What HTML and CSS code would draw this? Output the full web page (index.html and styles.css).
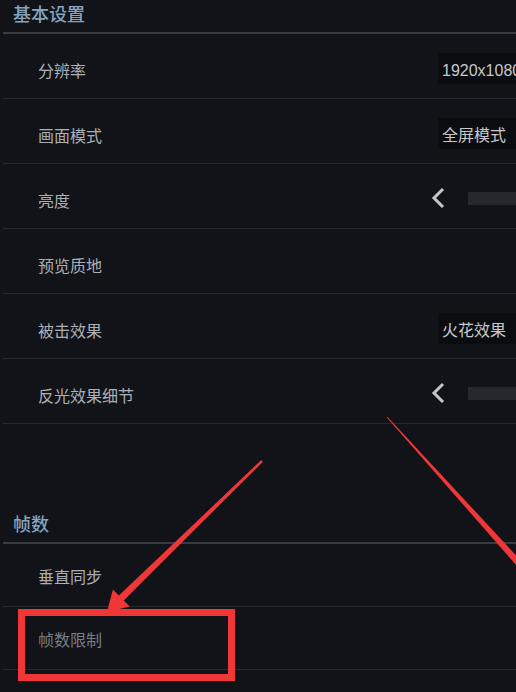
FILE: index.html
```html
<!DOCTYPE html>
<html>
  <head>
    <meta charset="utf-8">
    <meta name="viewport" content="width=device-width, initial-scale=1">
    <title>设置</title>
    <link rel="stylesheet" href="styles.css">
  </head>
<body>
  <div class="settings">

    <div class="group-title">基本设置</div>

    <div class="row">
      <div class="label">分辨率</div>
      <div class="control"><span class="value">1920x1080</span></div>
    </div>
    <div class="row">
      <div class="label">画面模式</div>
      <div class="control"><span class="value">全屏模式</span></div>
    </div>
    <div class="row">
      <div class="label">亮度</div>
      <div class="control">
        <svg class="chevron" width="16" height="22" viewBox="0 0 16 22"><polyline points="13,2 4,11 13,20" /></svg>
        <div class="slider"></div>
      </div>
    </div>
    <div class="row">
      <div class="label">预览质地</div>
      <div class="control"></div>
    </div>
    <div class="row">
      <div class="label">被击效果</div>
      <div class="control"><span class="value">火花效果</span></div>
    </div>
    <div class="row">
      <div class="label">反光效果细节</div>
      <div class="control">
        <svg class="chevron" width="16" height="22" viewBox="0 0 16 22"><polyline points="13,2 4,11 13,20" /></svg>
        <div class="slider"></div>
      </div>
    </div>

    <div class="group-title second">帧数</div>

    <div class="row short">
      <div class="label">垂直同步</div>
      <div class="control"></div>
    </div>
    <div class="row short">
      <div class="label dim">帧数限制</div>
      <div class="control"></div>
    </div>

  </div>

  <!-- red marks drawn over the screenshot -->
  <svg class="marks" width="516" height="692" viewBox="0 0 516 692">
    <polygon points="261.2,460.1 118.9,595.5 112.9,589.4 107,612 129.7,606.6 123.7,600.5 262.8,461.9" />
    <polygon points="386.6,417.3 387.4,416.7 532.6,573.2 527.4,577.9" />
    <rect x="21.5" y="612.5" width="210" height="65" />
  </svg>
</body>
</html>
```

FILE: styles.css
```css
body, html {margin: 0; padding: 0; background-color: rgb(17, 19, 24); overflow: hidden;}

body {
  width: 516px;
  height: 692px;
  position: relative;
  font-family: "Noto Sans CJK SC", "Liberation Sans", sans-serif;
}

.settings {
  padding-left: 3px;
}

.group-title {
  line-height: 26px;
  padding-bottom: 6px;
  padding-left: 10px;
  font-size: 18px;
  font-weight: 500;
  color: rgb(132, 164, 192);
  border-bottom: 2px solid rgb(56, 59, 66);
}

.group-title.second {
  margin-top: 86px;
}

.row {
  display: grid;
  grid-template-columns: 427px 1fr;
  align-items: center;
  height: 65px;
  box-sizing: border-box;
  padding-top: 7px;
  border-bottom: 1px solid rgb(37, 40, 46);
  overflow: hidden;
}

.row.short {
  height: 63px;
  padding-top: 2px;
}

.row .label {
  padding-left: 35px;
  font-size: 16px;
  color: rgb(172, 176, 182);
}

.row .label.dim {
  color: rgb(122, 126, 133);
}

.control {
  display: flex;
  align-items: center;
  white-space: nowrap;
  margin-top: -3px;
}

.value {
  margin-left: 8px;
  padding: 7px 20px 3px 4px;
  background-color: rgb(11, 12, 15);
  font-family: "Liberation Sans", "Noto Sans CJK SC", sans-serif;
  font-size: 16px;
  line-height: 21px;
  color: rgb(200, 201, 204);
}

.chevron polyline {
  fill: none;
  stroke: rgb(196, 198, 202);
  stroke-width: 3;
}

.slider {
  margin-left: 22px;
  width: 60px;
  height: 13px;
  background-color: rgb(37, 40, 45);
}

.marks {
  position: absolute;
  top: 0;
  left: 0;
  pointer-events: none;
}

.marks polygon {
  fill: rgb(240, 54, 54);
}

.marks rect {
  fill: none;
  stroke: rgb(240, 54, 54);
  stroke-width: 7;
}
```
